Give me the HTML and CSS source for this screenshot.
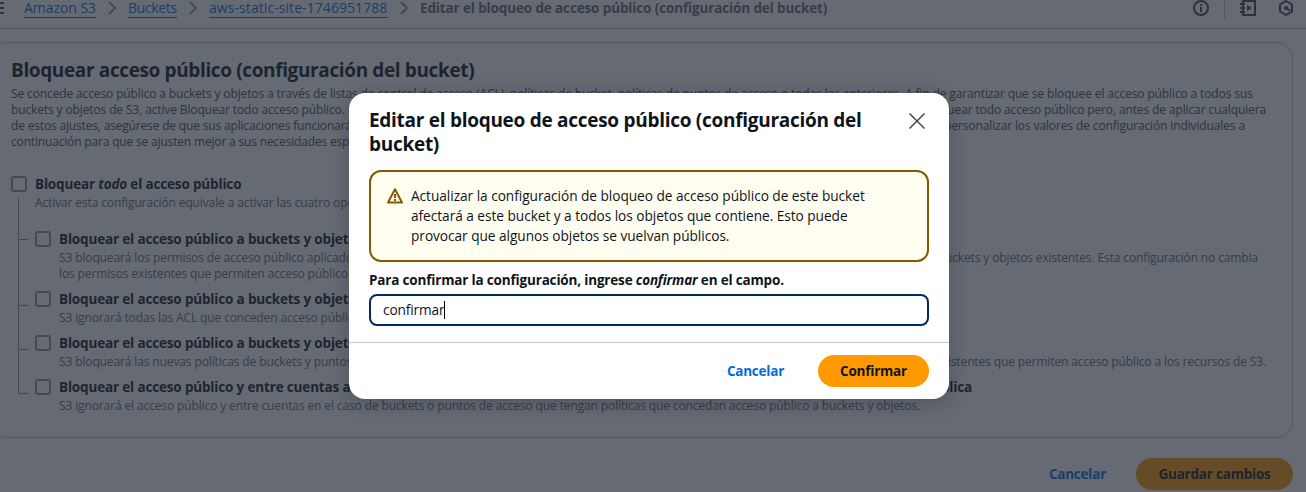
FILE: index.html
```html
<!DOCTYPE html>
<html lang="es">
<head>
<meta charset="utf-8">
<title>Editar el bloqueo de acceso público</title>
<link rel="stylesheet" href="styles.css">
</head>
<body>
<div class="page">
  <header class="topbar">
    <svg class="menu" width="16" height="16" viewBox="0 0 16 16"><path d="M1 3h14M1 8h14M1 13h14"/></svg>
    <nav class="crumbs">
      <a class="crumb-link amazon">Amazon S3</a>
      <svg class="chevron" width="8" height="14" viewBox="0 0 8 14"><path d="M1 1l6 6-6 6"/></svg>
      <a class="crumb-link buckets">Buckets</a>
      <svg class="chevron" width="8" height="14" viewBox="0 0 8 14"><path d="M1 1l6 6-6 6"/></svg>
      <a class="crumb-link site">aws-static-site-1746951788</a>
      <svg class="chevron" width="8" height="14" viewBox="0 0 8 14"><path d="M1 1l6 6-6 6"/></svg>
      <span class="crumb-current">Editar el bloqueo de acceso público (configuración del bucket)</span>
    </nav>
    <div class="tools">
      <svg width="16" height="16" viewBox="0 0 16 16"><circle cx="8" cy="8" r="7"/><path d="M8 7v5M8 4v2"/></svg>
      <span class="divider"></span>
      <svg class="book" width="16" height="16" viewBox="0 0 16 16"><path d="M3 3V1h12v14H3v-2M3 5v2M3 9v2M0 4h5M0 8h5M0 12h5"/><path class="solid" d="M7 5l5 3-5 3z"/></svg>
      <svg width="16" height="16" viewBox="0 0 16 16"><path d="M8 1l6 3.500v7L8 15l-6-3.500v-7zM8 8l4 2.500"/><circle class="solid" cx="8" cy="8" r="2"/></svg>
    </div>
  </header>

  <main class="card">
    <h2>Bloquear acceso público (configuración del bucket)</h2>
    <div class="intro">
      <p class="l1">Se concede acceso público a buckets y objetos a través de listas de control de acceso (ACL), políticas de bucket, políticas de puntos de acceso o todas las anteriores. A fin de garantizar que se bloquee el acceso público a todos sus</p>
      <p class="line l2"><span>buckets y objetos de S3, active Bloquear todo acceso público. Esta configuración se aplica a este bucket.</span><span>AWS recomienda bloquear todo acceso público pero, antes de aplicar cualquiera</span></p>
      <p class="line l3"><span class="tight">de estos ajustes, asegúrese de que sus aplicaciones funcionarán correctamente sin acceso público.</span><span>Puede personalizar los valores de configuración individuales a</span></p>
      <p class="tight">continuación para que se ajusten mejor a sus necesidades específicas de almacenamiento.</p>
    </div>

    <div class="tree">
      <svg class="branches" width="11" height="196" viewBox="0 0 11 196"><path d="M.5 0v195.500M0 41.500h10M0 107.500h10M0 151.500h10M0 195.500h10"/></svg>
      <div class="option root">
        <span class="box"></span>
        <div><h3>Bloquear <em>todo</em> el acceso público</h3>
        <p>Activar esta configuración equivale a activar las cuatro opciones que aparecen a continuación.</p></div>
      </div>
      <div class="children">
        <div class="option">
          <span class="box"></span>
          <div><h3>Bloquear el acceso público a buckets y objetos concedido a través de nuevas listas (ACL)</h3>
          <p class="line d1"><span>S3 bloqueará los permisos de acceso público aplicados a objetos o buckets agregados recientemente.</span><span>Para buckets y objetos existentes. Esta configuración no cambia</span></p>
          <p>los permisos existentes que permiten acceso público a los recursos de S3 mediante ACL.</p></div>
        </div>
        <div class="option">
          <span class="box"></span>
          <div><h3>Bloquear el acceso público a buckets y objetos concedido a través de cualquier lista (ACL)</h3>
          <p>S3 ignorará todas las ACL que conceden acceso público a buckets y objetos.</p></div>
        </div>
        <div class="option">
          <span class="box"></span>
          <div><h3>Bloquear el acceso público a buckets y objetos concedido a través de políticas nuevas</h3>
          <p class="line d3"><span>S3 bloqueará las nuevas políticas de buckets y puntos de acceso que concedan acceso público.</span><span>No cambia las políticas existentes que permiten acceso público a los recursos de S3.</span></p></div>
        </div>
        <div class="option">
          <span class="box"></span>
          <div><h3 class="line h4"><span>Bloquear el acceso público y entre cuentas a buckets y objetos concedido a través de</span><span>política pública</span></h3>
          <p>S3 ignorará el acceso público y entre cuentas en el caso de buckets o puntos de acceso que tengan políticas que concedan acceso público a buckets y objetos.</p></div>
        </div>
      </div>
    </div>
  </main>

  <div class="actions">
    <button class="btn link">Cancelar</button>
    <button class="btn primary save">Guardar cambios</button>
  </div>
</div>

<div class="overlay">
  <section class="modal" role="dialog">
    <div class="modal-head">
      <h1>Editar el bloqueo de acceso público (configuración del<br>bucket)</h1>
      <svg class="close" width="16" height="16" viewBox="0 0 16 16"><path d="M.5.5l15 15M15.500.5l-15 15"/></svg>
    </div>
    <div class="alert">
      <svg width="16" height="16" viewBox="0 0 16 16"><path d="M8 1.200L15 14.500H1z"/><path class="mark" d="M8 6v4M8 11v2"/></svg>
      <p>Actualizar la configuración de bloqueo de acceso público de este bucket<br>afectará a este bucket y a todos los objetos que contiene. Esto puede<br>provocar que algunos objetos se vuelvan públicos.</p>
    </div>
    <div class="field-label">Para confirmar la configuración, ingrese <em>confirmar</em> en el campo.</div>
    <div class="field"><span>confirmar</span><i class="caret"></i></div>
    <footer class="modal-foot">
      <button class="btn link">Cancelar</button>
      <button class="btn primary confirm">Confirmar</button>
    </footer>
  </section>
</div>
</body>
</html>
```
FILE: styles.css
```css
* { box-sizing: border-box; }
body {
  margin: 0;
  height: 492px;
  overflow: hidden;
  background: #fff;
  color: #0f141a;
  font-family: "Open Sans", "Noto Sans", sans-serif;
}
h1, h2, h3, p { margin: 0; }
svg { display: block; flex: none; fill: none; stroke: #424650; stroke-width: 2; }
.page { height: 492px; overflow: hidden; }

.topbar {
  display: flex;
  align-items: flex-start;
  height: 29px;
  border-bottom: 1px solid #c6c6cd;
}
.menu { margin-left: -11px; }
.crumbs {
  display: flex;
  align-items: flex-start;
  margin-left: 19px;
  font-size: 14px;
  line-height: 16px;
  white-space: nowrap;
}
.crumb-link { height: 18px; color: #006ce0; border-bottom: 1px solid #006ce0; }
.amazon { width: 72px; letter-spacing: -.05px; }
.buckets { width: 49px; letter-spacing: -.36px; }
.site { width: 179px; letter-spacing: .07px; }
.chevron { margin: 1px 12px 0; stroke: #8c8c94; }
.crumb-current { color: #656871; font-size: 13.5px; font-weight: 700; letter-spacing: -.13px; }
.tools { display: flex; margin: 0 12px 0 auto; }
.divider { width: 1px; height: 20px; margin: 0 15px; background: #c6c6cd; }
.book { margin-right: 22px; }
.solid { fill: #424650; stroke: none; }

.card {
  width: 1302px;
  height: 396px;
  margin: 13px 0 0 -9px;
  padding: 15px 19px;
  border: 1px solid #c6c6cd;
  border-radius: 16px;
}
h2 { font-size: 19px; line-height: 24px; letter-spacing: -.37px; margin-bottom: 4px; }
p { white-space: nowrap; }
.intro, .option p { font-size: 12px; line-height: 16px; letter-spacing: -.125px; }
.intro { color: #424650; }
.intro .tight { letter-spacing: -.17px; }
.option p { color: #656871; }
.line { display: flex; justify-content: space-between; white-space: nowrap; }
.l2 { width: 1255px; }
.l3 { width: 1234px; }
.d1 { width: 1199px; }
.d3 { width: 1207px; }
.h4 { width: 913px; }

.tree { position: relative; margin-top: 24px; }
.branches { position: absolute; left: 7px; top: 24px; stroke: #8c8c94; stroke-width: 1; }
.option { display: flex; gap: 8px; }
.box { flex: none; width: 16px; height: 16px; margin-top: 2px; border: 2px solid #8c8c94; border-radius: 3px; }
h3 { margin-bottom: 1px; font-size: 13.5px; line-height: 20px; letter-spacing: -.16px; white-space: nowrap; }
.children { display: flex; flex-direction: column; gap: 7px; margin: 18px 0 0 24px; }

.actions { display: flex; justify-content: flex-end; gap: 8px; padding: 20px 13px 0 0; }
.btn {
  height: 32px;
  padding: 0;
  border: 0;
  border-radius: 16px;
  background: none;
  color: #0f141a;
  font: 700 13.5px/20px "Open Sans", "Noto Sans", sans-serif;
  letter-spacing: -.22px;
}
.link { width: 101px; color: #006ce0; }
.primary { background: #ff9900; }
.save { width: 157px; }
.confirm { width: 111px; }

.overlay {
  position: absolute;
  inset: 0;
  display: flex;
  justify-content: center;
  align-items: flex-start;
  padding: 93px 8px 0 0;
  background: rgba(35, 43, 55, .7);
}
.modal {
  width: 600px;
  height: 306px;
  border-radius: 16px;
  background: #fff;
  box-shadow: 0 4px 20px 1px rgba(0, 7, 22, .2);
}
.modal-head { display: flex; justify-content: space-between; padding: 15px 24px 0 20px; }
h1 { font-size: 19px; line-height: 24px; letter-spacing: -.28px; white-space: nowrap; }
.close { margin-top: 5px; stroke-width: 1.5; }
.alert {
  display: flex;
  gap: 8px;
  height: 92px;
  margin: 14px 20px 0;
  padding: 14px 16px;
  border: 2px solid #855900;
  border-radius: 12px;
  background: #fffef0;
  font-size: 13.7px;
  line-height: 20px;
  letter-spacing: -.045px;
}
.alert svg { margin-top: 2px; stroke: #855900; stroke-linejoin: round; }
.field-label { margin: 8px 20px 4px; font-size: 13.5px; font-weight: 700; line-height: 20px; letter-spacing: -.17px; white-space: nowrap; }
.field {
  display: flex;
  align-items: center;
  height: 32px;
  margin: 0 20px;
  padding: 0 0 1px 12px;
  border: 2px solid #002b66;
  border-radius: 8px;
  font-size: 13.7px;
  line-height: 19px;
  letter-spacing: -.15px;
}
.caret { width: 1px; height: 18px; background: #000; }
.modal-foot {
  display: flex;
  justify-content: flex-end;
  gap: 12px;
  margin-top: 16px;
  padding: 12px 20px 0 0;
  border-top: 1px solid #c6c6cd;
}
```
